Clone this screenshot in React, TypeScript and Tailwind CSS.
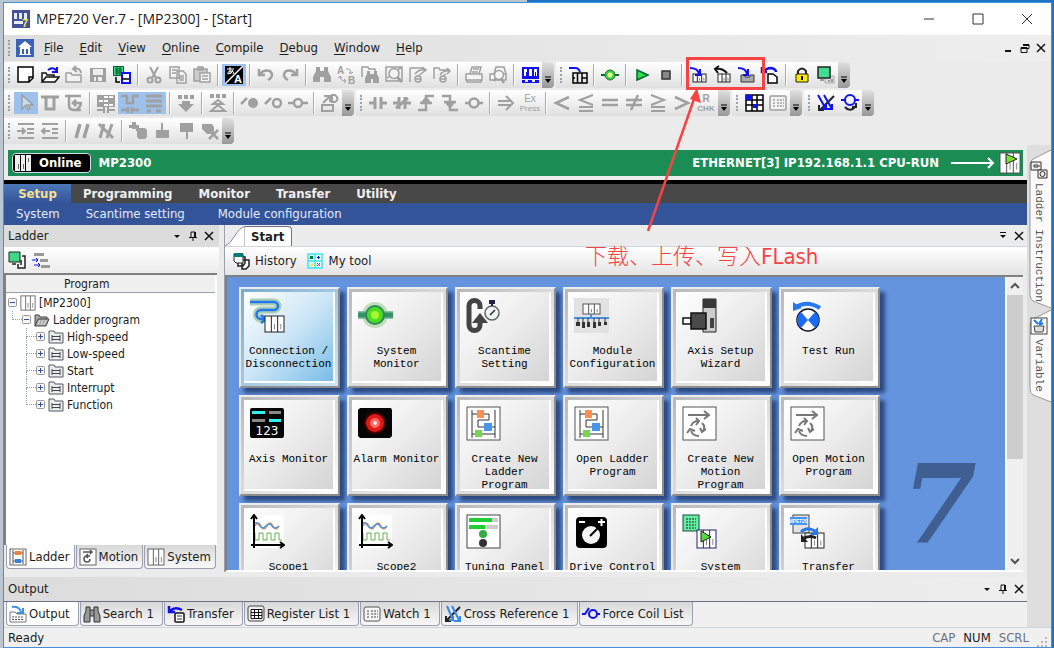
import type { ReactNode } from 'react';
import clsx from 'clsx';

const G = '#a0a0a0';
const B = '#1010f0';

const rack = (x: number, y: number, w: number, h: number, stroke = '#222') => (
  <g fill="#fff" stroke={stroke}>
    <rect x={x} y={y} width={w} height={h} />
    <path d={`M${x + w / 3} ${y}v${h}M${x + (2 * w) / 3} ${y}v${h}`} />
    <path stroke="#888" d={`M${x + w / 2} ${y + h / 2}v${h / 3}M${x + (5 * w) / 6} ${y + h / 2}v${h / 3}`} />
  </g>
);

// Toolbar glyphs, all drawn on a 20 x 20 grid
const glyphs: Record<string, ReactNode> = {
  new: <path fill="#fff" stroke="#000" strokeWidth="1.500" d="M2 2h15v11l-4 4H2zM17 12h-4v5" />,
  open: (
    <>
      <path fill="#fff" stroke="#111" strokeWidth="1.500" d="M2 16V8h4l1 2h7v2M2 17l4-5h13l-4 5z" />
      <path fill="none" stroke={B} strokeWidth="2" d="M8 5q5-4 9 1M17 2v5h-5" />
    </>
  ),
  close: (
    <>
      <path fill="#f2f2f2" stroke={G} strokeWidth="1.500" d="M2 17V8h5l1 2h9v7z" />
      <path fill="none" stroke={G} strokeWidth="2" d="M17 8q-1-6-7-4M12 1L9 4l4 3" />
    </>
  ),
  save: (
    <>
      <path fill={G} d="M2 3h16v14H2z" />
      <path fill="#eee" d="M5 4h10v6H5zM6 12h8v4H6z" />
      <path fill={G} d="M8 12h2v4H8z" />
    </>
  ),
  transferAll: (
    <>
      <path fill="#3fdc80" stroke="#053" strokeWidth="1" d="M1.500 1.500h10v9h-10z" />
      <path stroke="#053" d="M3 4h7M3 6h7M3 8h7M5 2v8M8 2v8" />
      <path fill="#fff" stroke={B} strokeWidth="2" d="M10 8h8v10h-8z" />
      <path fill="none" stroke="#000" strokeWidth="1.500" d="M4 12v5h4M10 14h7" />
    </>
  ),
  cut: (
    <g fill="none" stroke={G} strokeWidth="2">
      <path d="M6 2l6 11M14 2L8 13" />
      <circle cx="6" cy="15" r="2.500" />
      <circle cx="14" cy="15" r="2.500" />
    </g>
  ),
  copy: (
    <g fill="#f4f4f4" stroke={G} strokeWidth="1.500">
      <path d="M2 2h9v11H2zM9 6h6l3 3v9H9z" />
      <path d="M4 5h5M4 8h4M11 11h5M11 13h5M11 15h5" />
    </g>
  ),
  paste: (
    <g fill="#f4f4f4" stroke={G} strokeWidth="1.500">
      <path fill="#ccc" d="M2 4h13v12H2zM6 2h5v3H6z" />
      <path d="M8 8h10v9H8zM10 11h6M10 14h6" />
    </g>
  ),
  translate: (
    <>
      <path d="M1 1h18v18H1z" />
      <path fill="#fff" d="M18 1h1v1L2 19H1v-1z" />
      <path fill="none" stroke="#fff" d="M3 4h7M6 2v7M9 5q-1 4-5 4q-1-3 4-3q3 1 1 3" />
      <text x="10" y="18" fontSize="11" fontWeight="bold" fill="#fff" fontFamily="Liberation Sans">A</text>
    </>
  ),
  undo: <path fill="none" stroke={G} strokeWidth="2.500" d="M3 4v6h6M4 9q4-5 10-3q5 5-2 9" />,
  redo: <path fill="none" stroke={G} strokeWidth="2.500" d="M17 4v6h-6M16 9q-4-5-10-3q-5 5 2 9" />,
  find: <path fill={G} d="M4 2h4v4h4V2h4v4l3 6v5h-7v-5H8v5H1v-5l3-6z" />,
  replace: (
    <g fill={G} stroke={G}>
      <text x="1" y="9" fontSize="10" stroke="none" fontWeight="bold" fontFamily="Liberation Sans">A</text>
      <text x="12" y="19" fontSize="10" stroke="none" fontWeight="bold" fontFamily="Liberation Sans">B</text>
      <path fill="none" d="M10 4q5-1 5 5M13 7l2 2 2-2M4 11q0 5 6 5M8 14l2 2-2 2M4 11l-2 2M4 11l2 2" />
    </g>
  ),
  findIn: (
    <>
      <path fill="none" stroke={G} strokeWidth="1.500" d="M2 12V2h6l1 2h6v3" />
      <path fill={G} d="M7 6h3v3h4V6h3v3l2 4v5h-6v-4h-2v4H5v-5l2-4z" />
    </>
  ),
  zoomPage: (
    <g fill="#f2f2f2" stroke={G} strokeWidth="1.500">
      <path fill="none" d="M2 2h16v14H2zM3 13l4-3M13 5l4-2" />
      <circle cx="10" cy="8.500" r="5" />
      <path strokeWidth="2.500" d="M13 12l5 5" />
    </g>
  ),
  jumpDoc: (
    <g fill="none" stroke={G} strokeWidth="1.500">
      <path d="M2 3h13v2M2 3v14M7 9q4-5 10-4M14 2l4 3-4 3" />
      <circle cx="10" cy="14" r="3" />
      <path d="M8 14h4M10 11l4-3" />
    </g>
  ),
  jumpFolder: (
    <g fill="none" stroke={G} strokeWidth="1.500">
      <path d="M2 14V3h5l1 2h8M8 10q3-5 10-4M15 3l3 3-3 3" />
      <circle cx="11" cy="14" r="3" />
      <path d="M9 14h4M11 11l3-2" />
    </g>
  ),
  print: (
    <g fill="#f4f4f4" stroke={G} strokeWidth="1.500">
      <path d="M6 9l2-7h9l-2 7zM2 9h16v6H2zM3 15h14v2H3zM9 4h6M8 7h6" />
    </g>
  ),
  preview: (
    <g fill="#f4f4f4" stroke={G} strokeWidth="1.500">
      <path d="M6 9l2-7h8l2 7zM2 9h16v6H2z" />
      <circle cx="11" cy="10" r="4.500" />
      <path strokeWidth="2.500" d="M13 13l3 5M8 13l-2 3" />
    </g>
  ),
  modules: (
    <>
      <path fill={B} d="M2 2h17v12H2zM2 15h3v2h3v-2h4v2h3v-2h4v3H2z" />
      <path fill="#fff" d="M4 4h3v7H4zM9 4h3v7H9zM14 4h3v7h-3z" />
      <path fill={B} d="M6 7h2v4H6zM15 7h1v4h-1z" />
    </>
  ),
  connect: (
    <>
      <path fill="none" stroke={B} strokeWidth="2" d="M1 3h6q4 0 5 4" />
      <path fill="none" stroke="#000" strokeWidth="1.500" d="M5 8h14v10H5zM9.500 8v10M14 8v10M5 13h2M14 13h5" />
    </>
  ),
  node: (
    <>
      <path stroke="#086838" strokeWidth="2" d="M1 10h18" />
      <circle cx="10" cy="10" r="5" fill="#2ad84a" stroke="#3c6a30" />
      <circle cx="10" cy="10" r="2.500" fill="#f4ff80" />
    </>
  ),
  play: <path fill="#2ee04c" stroke="#063" strokeWidth="1.500" d="M5 5l11 5-11 5z" />,
  stop: <path fill="#888" stroke="#333" strokeWidth="1.500" d="M6 6h8v8H6z" />,
  download: (
    <>
      {rack(5, 9, 13, 8)}
      <path fill="none" stroke={B} strokeWidth="2" d="M2 3q8 0 9 6M12 4v6H7" />
    </>
  ),
  upload: (
    <>
      {rack(6, 9, 12, 8)}
      <path fill="none" stroke="#111" strokeWidth="2" d="M15 8q-5-5-11-4M7 1L3 4l3 4" />
    </>
  ),
  flash: (
    <>
      <path fill="#aaa" stroke="#333" d="M5 10h4v2h5v-2h4v7H5z" />
      <path fill="none" stroke={B} strokeWidth="2" d="M2 3q8 0 9 6M12 4v6H7" />
    </>
  ),
  copyBack: (
    <>
      <path fill="#fff" stroke="#000" strokeWidth="1.500" d="M8 9h5l4 3v6H8z" />
      <path fill="none" stroke={B} strokeWidth="2.500" d="M2 2v5h5M3 7q3-4 8-4q5 1 5 4" />
    </>
  ),
  lock: (
    <>
      <path fill="none" stroke="#222" strokeWidth="2" d="M6 10V6q4-5 8 0v4" />
      <path fill="#ffe800" stroke="#222" d="M4 9h12v8H4z" />
      <path d="M9 11h2v4H9z" />
    </>
  ),
  compare: (
    <>
      <path fill="#ddd" stroke="#aaa" d="M9 11h9v7H9z" />
      <path fill="#40dc90" stroke="#222" strokeWidth="1.500" d="M2 2h12v11H2z" />
      <path stroke="#555" d="M4 15h4M13 15v2M16 14v3" />
    </>
  ),
  pointer: <path fill="#c8dcf4" stroke={G} strokeWidth="1.500" d="M6 2v14l4-4 2 5 2-1-2-4h5z" />,
  branch: <path fill="none" stroke={G} strokeWidth="3" d="M1 4h18M6 4v12h8V4" />,
  branchTurn: (
    <g fill="none" stroke={G} strokeWidth="2.500">
      <path d="M1 3h16M5 3v9q0 5 5 5h7M12 17q5-3 5-8M9 10h8M12 7l-3 3 3 3" />
    </g>
  ),
  tableRung: (
    <>
      <path fill={G} d="M1 2h18v12H1z" />
      <path fill="#fff" d="M8 3h4v2H8zM13 3h4v2h-4zM3 7h4v2H3zM8 7h4v2H8zM13 11h4v2h-4zM8 11h4v2H8z" />
      <path fill="none" stroke={G} strokeWidth="2" d="M1 17h6M13 17h6M8 14v6M12 14v6" />
    </>
  ),
  series: <path fill="none" stroke={G} strokeWidth="2.500" d="M1 3h6v7h6V3h6M1 17h6M8 14v6M12 14v6M13 17h6" />,
  parallel: <path fill="none" stroke={G} strokeWidth="3" d="M2 3h16M2 8h16M2 13h16M3 18h4M12 18h5" />,
  expandDown: <path fill={G} d="M2 2h4v4H2zM8 2h4v4H8zM14 2h4v4h-4zM6 8h8v3h4l-8 8-8-8h4z" />,
  expandUp: (
    <>
      <path fill={G} d="M2 1h4v4H2zM8 1h4v4H8zM14 1h4v4h-4z" />
      <path fill="none" stroke={G} strokeWidth="2" d="M10 7l-5 4h10zM10 12l-7 6h14z" />
    </>
  ),
  forceOn: (
    <>
      <path stroke={G} strokeWidth="2.500" d="M1 11l6-6" />
      <circle cx="13" cy="10" r="5" fill={G} />
    </>
  ),
  forceOff: (
    <g fill="none" stroke={G} strokeWidth="2.500">
      <path d="M1 11l6-6" />
      <circle cx="13" cy="10" r="4" />
    </g>
  ),
  forceClear: (
    <g fill="none" stroke={G} strokeWidth="2.500">
      <path d="M0 10h6M14 10h6" />
      <circle cx="10" cy="10" r="4" />
    </g>
  ),
  popOut: (
    <g fill="none" stroke={G} strokeWidth="2">
      <path d="M2 12h11v6H2zM3 10l6-6M4 3h6v6M12 2h3q5 4 0 7h-3z" />
    </g>
  ),
  contactNo: <path fill="none" stroke={G} strokeWidth="3" d="M1 10h6M7 4v12M13 4v12M13 10h6" />,
  contactNc: <path fill="none" stroke={G} strokeWidth="3" d="M1 10h5M7 4v12M13 4v12M14 10h5M4 15L16 5" />,
  rising: <path fill="none" stroke={G} strokeWidth="2.500" d="M2 17h8V3h8M4 10h12M6 10l4-5 4 5" />,
  falling: <path fill="none" stroke={G} strokeWidth="2.500" d="M2 3h8v14h8M4 9h12M6 9l4 5 4-5" />,
  coil: (
    <g fill="none" stroke={G} strokeWidth="2.500">
      <path d="M1 10h4M15 10h4" />
      <circle cx="10" cy="10" r="4.500" />
    </g>
  ),
  arrow: <path fill="none" stroke={G} strokeWidth="2" d="M2 8h12M2 12h12M10 3l7 7-7 7" />,
  express: (
    <g fill={G} fontFamily="Liberation Sans" textAnchor="middle">
      <text x="10" y="9" fontSize="10">Ex</text>
      <text x="10" y="18" fontSize="8">Press</text>
    </g>
  ),
  lt: <path fill="none" stroke={G} strokeWidth="2.500" d="M17 4L4 10l13 6" />,
  le: <path fill="none" stroke={G} strokeWidth="2" d="M17 2L4 7l13 5M3 14h14M3 18h14" />,
  eq: <path stroke={G} strokeWidth="2.500" d="M2 7h16M2 12h16" />,
  ne: <path stroke={G} strokeWidth="2.500" d="M2 7h16M2 12h16M14 2L7 17" />,
  ge: <path fill="none" stroke={G} strokeWidth="2" d="M3 2l13 5-13 5M3 14h14M3 18h14" />,
  gt: <path fill="none" stroke={G} strokeWidth="2.500" d="M3 4l13 6-13 6" />,
  rangeCheck: (
    <g fill={G} fontFamily="Liberation Sans" fontWeight="bold" textAnchor="middle">
      <text x="10" y="9" fontSize="10">R</text>
      <text x="10" y="18" fontSize="8">CHK</text>
    </g>
  ),
  registerGrid: (
    <>
      <path fill="#fff" stroke="#000" strokeWidth="1.500" d="M2 2h17v16H2zM2 7h17M2 12h17M8 2v16M13 2v16" />
      <path fill={B} d="M2 2h6v5H2zM9 11h5v4H9z" />
    </>
  ),
  watchList: (
    <g fill="#f2f2f2" stroke={G} strokeWidth="1.500">
      <rect x="2" y="3" width="16" height="14" rx="1" />
      <path strokeDasharray="2 1" d="M5 7h2M9 7h7M5 10h2M9 10h7M5 13h2M9 13h7" />
    </g>
  ),
  crossRef: (
    <g fill="none" strokeWidth="2">
      <path stroke="#222" d="M18 3L4 17M3 12v5h5" />
      <path stroke={B} d="M2 2l8 14M8 2l8 14M11 16h5v-5M5 16h5v-5" />
    </g>
  ),
  forceCoil: (
    <g fill="none" strokeWidth="2">
      <path stroke={B} d="M1 7h4M14 7h5" />
      <circle cx="10" cy="7" r="5" stroke={B} />
      <path stroke="#222" d="M5 14q5 6 11-1M16 10v4h-4" />
    </g>
  ),
  indent: <path fill="none" stroke={G} strokeWidth="2" d="M2 3h16M11 8h7M11 12h7M2 17h16M1 10h8M6 7l3 3-3 3" />,
  outdent: <path fill="none" stroke={G} strokeWidth="2" d="M2 3h16M12 8h6M12 12h6M2 17h16M2 10h8M5 7l-3 3 3 3" />,
  comment: <path stroke={G} strokeWidth="3.500" d="M8 3L4 17M16 3l-4 14" />,
  uncomment: <path stroke={G} strokeWidth="3" d="M8 3L4 17M16 3l-5 14M3 3l14 14" />,
  addBlock: <path fill={G} d="M1 4h3V1h4v3h3v3h6l2 2v7l-2 2h-6l-2-2V10H8V8H4V7H1z" />,
  insertUp: <path fill={G} d="M9 2h2v7h6v8H4V9h5z" />,
  insertDown: <path fill={G} d="M4 2h13v9h-5v7h-2v-7H4z" />,
  removeBlock: (
    <>
      <path fill={G} d="M2 3h10l2 3v7H7L2 8z" />
      <path stroke={G} strokeWidth="2.500" d="M8 8l10 10M18 9l-9 9" />
    </>
  ),
};

const toolbarRows: string[][][] = [
  [
    ['new', 'open', 'close', 'save', 'transferAll', '|', 'cut', 'copy', 'paste', '|', '*translate', '|', 'undo', 'redo', '|',
      'find', 'replace', 'findIn', 'zoomPage', 'jumpDoc', 'jumpFolder', '|', 'print', 'preview', '|', 'modules'],
    ['connect', '|', 'node', '|', 'play', 'stop', '|', 'download', 'upload', 'flash', 'copyBack', '|', 'lock', 'compare'],
  ],
  [
    ['*pointer', 'branch', 'branchTurn', '|', 'tableRung', '*series', '*parallel', '|', 'expandDown', '|', 'expandUp', '|',
      'forceOn', 'forceOff', 'forceClear', '|', 'popOut'],
    ['contactNo', 'contactNc', 'rising', 'falling', 'coil', '|', 'arrow', 'express', '|', 'lt', 'le', 'eq', 'ne', 'ge', 'gt', 'rangeCheck'],
    ['registerGrid', 'watchList'],
    ['crossRef', 'forceCoil'],
  ],
  [['indent', 'outdent', '|', 'comment', 'uncomment', '|', 'addBlock', 'insertUp', 'insertDown', 'removeBlock']],
];

function Grip() {
  return (
    <span className="flex w-2.5 items-center justify-center">
      <span className="h-4 border-l-2 border-dotted border-gray-400" />
    </span>
  );
}

function Toolbar({ items }: { items: string[] }) {
  return (
    <div role="toolbar" className="mr-0.5 flex h-[26px] shrink-0 rounded-r bg-linear-to-b from-white to-[#e0e0e0]">
      <Grip />
      {items.map((item, i) => {
        if (item === '|') {
          return <span key={i} className="mx-[3px] my-0.5 w-0.5 border-l border-[#8fb2dc] bg-white" />;
        }
        const active = item.startsWith('*');
        const name = item.replace('*', '');
        return (
          <button key={i} type="button" aria-label={name} className={clsx('my-0.5 flex w-6 items-center justify-center', active && 'bg-[#9dc1ea]')}>
            <svg className="h-5 w-5" viewBox="0 0 20 20">{glyphs[name]}</svg>
          </button>
        );
      })}
      <button type="button" aria-label="Toolbar options" className="flex w-3 items-end justify-center rounded-r bg-linear-to-b from-[#e0e0e0] to-[#989898] pb-1">
        <svg className="h-2 w-2" viewBox="0 0 8 8"><path stroke="#000" d="M1 1h6" /><path d="M1 3h6L4 7z" /></svg>
      </button>
    </div>
  );
}

function Caret({ bar }: { bar?: boolean }) {
  return (
    <button type="button" aria-label="Options" className="flex h-4 w-4 items-center justify-center">
      <svg className="h-2.5 w-2.5" viewBox="0 0 10 10">{bar && <path stroke="#111" d="M2 1.500h6" />}<path fill="#111" d="M2 4h6L5 7z" /></svg>
    </button>
  );
}

function Pin() {
  return (
    <button type="button" aria-label="Pin" className="flex h-4 w-4 items-center justify-center">
      <svg className="h-2.5 w-2.5" viewBox="0 0 10 10"><path fill="none" stroke="#111" d="M3 6V1h4v5M1 6.500h8M5 7v3" /><path fill="#111" d="M6 1h2v5H6z" /></svg>
    </button>
  );
}

function Close() {
  return (
    <button type="button" aria-label="Close" className="flex h-4 w-4 items-center justify-center">
      <svg className="h-2.5 w-2.5" viewBox="0 0 10 10"><path stroke="#111" strokeWidth="1.500" d="M1 1l8 8M9 1L1 9" /></svg>
    </button>
  );
}

const menus = ['File', 'Edit', 'View', 'Online', 'Compile', 'Debug', 'Window', 'Help'];

const ladderIcon = (
  <>
    <rect x="1" y="1" width="33" height="33" fill="#fff" stroke="#555" />
    <path fill="none" stroke="#333" d="M6 4v28M29 4v28M6 8h17v6H12v7h17M6 28h23" />
    <path fill="#fb9050" d="M11 4h7v8h-7z" />
    <path fill="#4894ee" d="M18 17h8v8h-8z" />
    <path fill="#74d84c" d="M9 24h7v7H9z" />
  </>
);

const motionIcon = (
  <>
    <rect x="1" y="1" width="33" height="33" fill="#fff" stroke="#555" />
    <g fill="none" stroke="#777" strokeWidth="2">
      <path d="M6 9h21M22 5l5 4-5 4" />
      <path d="M9 20q2-5 7-5M14 12l3 3-3 4M20 17q4 4 1 8M24 23l-4 3-2-4M17 30q-6 0-8-5M5 27l3-4 5 2" />
    </g>
  </>
);

const scopeIcon = (
  <>
    <path fill="#fff" d="M1 1h33v33H1z" />
    <path fill="none" stroke="#e0965c" strokeWidth="1.500" d="M5 12q3-6 6 0t6 0t6 0t6 0" />
    <path fill="none" stroke="#5090d0" strokeWidth="1.500" d="M4 9q4-1 6 3t6 0t6 0t7 0" />
    <path fill="none" stroke="#60b050" d="M5 19v7h4v-7h4v7h4v-7h4v7h4v-7h4v7h3" />
    <path fill="none" stroke="#000" strokeWidth="2" d="M4 34V3M1 31h32M1 5l3-4 3 4M30 28l4 3-4 3" />
  </>
);

// Launcher tiles: 35 x 35 artwork plus a caption of one to three lines
const tiles: { lines: string[]; art: ReactNode; active?: boolean }[] = [
  {
    lines: ['Connection /', 'Disconnection'],
    active: true,
    art: (
      <>
        <path fill="none" stroke="#a9cfb0" strokeWidth="7" d="M0 4h24a4 4 0 0 1 0 8H11a4 4 0 0 0 0 9h4" />
        <path fill="none" stroke="#2277ee" strokeWidth="2.500" d="M0 4h24a4 4 0 0 1 0 8H11a4 4 0 0 0 0 9h4M11 17l5 4-5 4" />
        {rack(15, 18, 19, 16)}
      </>
    ),
  },
  {
    lines: ['System', 'Monitor'],
    art: (
      <>
        <circle cx="17" cy="17" r="13" fill="#c2dcbc" />
        <path stroke="#86c0a2" strokeWidth="8" d="M0 17h35" />
        <path stroke="#349068" strokeWidth="5" d="M0 17h35" />
        <circle cx="17" cy="17" r="9" fill="#4cdc22" stroke="#2d8a5a" strokeWidth="2" />
        <circle cx="17" cy="17" r="4" fill="#a8f830" />
      </>
    ),
  },
  {
    lines: ['Scantime', 'Setting'],
    art: (
      <>
        <path fill="none" stroke="#444" strokeWidth="5" d="M14 11V8a5 5 0 0 0-11 0v19a5 5 0 0 0 11 0v-6" />
        <path fill="#444" d="M14 15l8 10H6z" />
        <circle cx="26" cy="15" r="7" fill="#eef4f4" stroke="#666" strokeWidth="1.500" />
        <path stroke="#223" strokeWidth="1.500" d="M24 17l5-5" />
        <path fill="#224" d="M23 2h6v4h-6zM25 6h2v2h-2z" />
      </>
    ),
  },
  {
    lines: ['Module', 'Configuration'],
    art: (
      <>
        <path fill="#e2e2e2" d="M0 0h35v35H0z" />
        {rack(9, 6, 17, 10, '#555')}
        <path stroke="#4a90e0" strokeWidth="2" d="M0 20h35M17 16v4" />
        <path stroke="#333" d="M4 20v5M9 20v5M14 20v5M20 20v5M25 20v5M31 20v5" />
        <path fill="#333" d="M2 24h4v4H2zM8 24h3v6H8zM13 24h3v5h-3zM19 24h3v6h-3zM24 24h3v4h-3zM30 24h3v3h-3z" />
      </>
    ),
  },
  {
    lines: ['Axis Setup', 'Wizard'],
    art: (
      <>
        <path fill="#ccc" stroke="#222" d="M21 1h13v33H21z" />
        <path fill="#383838" d="M21 1h13v9H21z" />
        <path fill="#444" d="M28 20h4v10h-4z" />
        <path fill="#fff" stroke="#111" strokeWidth="1.500" d="M1 20h8v6H1z" />
        <path fill="#4a4a4a" stroke="#111" strokeWidth="1.500" d="M9 15h15v16H9z" />
      </>
    ),
  },
  {
    lines: ['Test Run'],
    art: (
      <>
        <path fill="none" stroke="#2878ee" strokeWidth="4" d="M6 9q11-7 24 1" />
        <path fill="#2878ee" d="M3 4v9l9-3z" />
        <circle cx="18" cy="22" r="11" fill="#fff" stroke="#112" strokeWidth="1.500" />
        <path fill="#1c6cf0" d="M18 22l-7-8a10 10 0 0 0 0 16zM18 22l7-8a10 10 0 0 1 0 16z" />
      </>
    ),
  },
  {
    lines: ['Axis Monitor'],
    art: (
      <>
        <rect x="0" y="2" width="34" height="30" rx="2" fill="#050505" />
        <path fill="#30f0f0" d="M2 5h13v3H2zM19 13h12v3H19z" />
        <path fill="#888" d="M19 5h12v3H19zM2 13h13v3H2z" />
        <text x="17" y="29" fontSize="12" fill="#fff" textAnchor="middle" fontFamily="DejaVu Sans">123</text>
      </>
    ),
  },
  {
    lines: ['Alarm Monitor'],
    art: (
      <>
        <path fill="#050505" d="M2 2h31l1 2v26l-2 2H2l-2-2V4z" />
        <circle cx="17" cy="17" r="11" fill="#400" />
        <circle cx="17" cy="17" r="9" fill="#e01818" />
        <circle cx="17" cy="17" r="5" fill="#ff6a60" />
        <circle cx="17" cy="17" r="2" fill="#ffe8e0" />
      </>
    ),
  },
  { lines: ['Create New', 'Ladder', 'Program'], art: ladderIcon },
  { lines: ['Open Ladder', 'Program'], art: ladderIcon },
  { lines: ['Create New', 'Motion', 'Program'], art: motionIcon },
  { lines: ['Open Motion', 'Program'], art: motionIcon },
  { lines: ['Scope1'], art: scopeIcon },
  { lines: ['Scope2'], art: scopeIcon },
  {
    lines: ['Tuning Panel'],
    art: (
      <>
        <rect x="1" y="1" width="33" height="33" fill="#fff" stroke="#444" />
        <path fill="#ccc" d="M3 4h29v4H3zM3 11h29v4H3z" />
        <path fill="#2c3" d="M3 4h23v4H3zM3 11h16v4H3z" />
        <circle cx="17" cy="20" r="4" fill="#3a4" />
        <circle cx="17" cy="29" r="4" fill="#333" />
      </>
    ),
  },
  {
    lines: ['Drive Control'],
    art: (
      <>
        <rect x="2" y="3" width="31" height="31" rx="4" />
        <path stroke="#fff" strokeWidth="2" d="M5 8h6M24 8h7M27.500 5v7" />
        <circle cx="17" cy="21" r="9" fill="#f4f4f4" />
        <path stroke="#000" strokeWidth="2" d="M16 22l8-8" />
      </>
    ),
  },
  {
    lines: ['System'],
    art: (
      <>
        <rect x="1" y="1" width="16" height="16" fill="#60f0a0" stroke="#244" />
        <path stroke="#222" strokeDasharray="2 1" d="M4 5h10M4 8h10M4 11h10M4 14h10" />
        {rack(15, 16, 19, 18, '#226')}
        <path fill="#58d840" stroke="#222" d="M19 17v11l10-5z" />
      </>
    ),
  },
  {
    lines: ['Transfer'],
    art: (
      <>
        <rect x="3" y="1" width="16" height="18" fill="#e4e4e4" stroke="#444" />
        <path fill="#4894ee" d="M0 3h17v8H0z" />
        <text x="8" y="9" fontSize="5" fontWeight="bold" fill="#fff" textAnchor="middle" fontFamily="Liberation Sans">MPE720</text>
        {rack(15, 19, 19, 15)}
        <path fill="none" stroke="#2878ee" strokeWidth="3" d="M11 18q6-6 14-1" />
        <path fill="#2878ee" d="M28 13v8h-8z" />
        <path fill="none" stroke="#222" strokeWidth="3" d="M26 24q-5-3-12 0" />
        <path fill="#222" d="M11 20v8h7z" />
      </>
    ),
  },
];

const smallLadder = (
  <>
    <rect x="1" y="1" width="16" height="16" fill="#fff" stroke="#666" />
    <path fill="none" stroke="#555" d="M4 2v14M14 2v14M4 5h10M4 13h10" />
    <path fill="#f08040" d="M6 3h6v4H6z" />
    <path fill="#3880e0" d="M6 11h6v4H6z" />
  </>
);
const smallMotion = (
  <>
    <rect x="1" y="1" width="16" height="16" fill="#fff" stroke="#666" />
    <path fill="none" stroke="#555" strokeWidth="1.500" d="M4 4h9M11 2l2 2-2 2M11 8H8a3 3 0 1 0 3 3M9 6L7 8l2 2" />
  </>
);
const smallRack = rack(1, 1, 16, 16, '#666');

const panelTabs = [
  { label: 'Ladder', icon: smallLadder },
  { label: 'Motion', icon: smallMotion },
  { label: 'System', icon: smallRack },
];

const outputTabs = [
  {
    label: 'Output',
    icon: (
      <>
        <path fill="#fff" stroke="#777" d="M1 7h5l2 2h9v8H1z" />
        <path stroke="#555" strokeDasharray="2 1" d="M3 12h12M3 14.500h12" />
        <path fill="none" stroke="#3c90e8" strokeWidth="2" d="M3 2q7-1 9 5M14 3v5H8" />
      </>
    ),
  },
  {
    label: 'Search 1',
    icon: <path fill="#999" stroke="#333" d="M3 2h4v3h4V2h4v4l2 5v6h-6v-6H7v6H1v-6l2-5zM7 5v6M11 5v6" />,
  },
  {
    label: 'Transfer',
    icon: (
      <>
        <rect x="8" y="8" width="9" height="9" rx="1" fill="#fff" stroke="#111" strokeWidth="1.500" />
        <path stroke="#333" d="M10 11h5M10 14h5" />
        <path fill="none" stroke={B} strokeWidth="2.500" d="M2 1v6h6M3 6q5-5 12-1" />
      </>
    ),
  },
  {
    label: 'Register List 1',
    icon: (
      <>
        <rect x="1" y="1" width="16" height="15" rx="2" fill="#eee" stroke="#444" />
        <path fill="#fff" stroke="#111" d="M4 4.500h11v9H4zM4 7.500h11M4 10.500h11M7.500 4v9M11.500 4v9" />
      </>
    ),
  },
  {
    label: 'Watch 1',
    icon: (
      <>
        <rect x="1" y="2" width="16" height="14" rx="2" fill="#f6f6f6" stroke="#555" />
        <path stroke="#444" strokeDasharray="2 1" d="M4 6h2M8 6h7M4 9h2M8 9h7M4 12h2M8 12h7" />
      </>
    ),
  },
  {
    label: 'Cross Reference 1',
    icon: (
      <g fill="none" strokeWidth="2">
        <path stroke="#222" d="M16 2L3 15M2 11v5h5" />
        <path stroke="#3888e8" d="M3 1l6 14M8 1l7 14M10 16h6v-5M5 15h4v-4" />
      </g>
    ),
  },
  {
    label: 'Force Coil List',
    icon: (
      <g fill="none" stroke={B} strokeWidth="2">
        <path d="M0 9h3l4-6M15 9h3" />
        <circle cx="11" cy="9" r="4" />
      </g>
    ),
  },
];

function SheetTab({ label, icon, active, className }: { label: string; icon: ReactNode; active: boolean; className: string }) {
  return (
    <button
      type="button"
      role="tab"
      aria-selected={active}
      className={clsx(
        'flex h-6 shrink-0 items-center gap-0.5 rounded-b border border-t-0 border-gray-400 pl-0.5 text-[13px]',
        active ? 'bg-white' : 'bg-linear-to-b from-[#d8d8d8] to-[#f8f8f8]',
        className,
      )}
    >
      <svg className="h-[18px] w-[18px]" viewBox="0 0 18 18">{icon}</svg>
      {label}
    </button>
  );
}

function Expander({ open }: { open?: boolean }) {
  return (
    <button type="button" aria-label={open ? 'Collapse' : 'Expand'} className="h-[9px] w-[9px] shrink-0">
      <svg className="h-[9px] w-[9px]" viewBox="0 0 9 9">
        <rect x="0.500" y="0.500" width="8" height="8" rx="1" fill="#f6f6f6" stroke="#999" />
        <path stroke="#35509a" d={open ? 'M2 4.500h5' : 'M2 4.500h5M4.500 2v5'} />
      </svg>
    </button>
  );
}

function Connector({ last }: { last?: boolean }) {
  return (
    <span className="ml-1 flex h-full w-2.5 flex-col">
      <span className="h-[9px] border-b border-l border-dotted border-gray-400" />
      {!last && <span className="flex-1 border-l border-dotted border-gray-400" />}
    </span>
  );
}

const folders = ['High-speed', 'Low-speed', 'Start', 'Interrupt', 'Function'];

function LadderPanel() {
  return (
    <aside className="flex w-[215px] shrink-0 flex-col">
      <div className="flex h-[22px] shrink-0 items-center bg-[#dcdcdc] pr-0.5 pl-1">
        <h2 className="flex-1 text-[13px]">Ladder</h2>
        <Caret />
        <Pin />
        <Close />
      </div>
      <div className="flex h-[26px] shrink-0 items-center gap-1.5 bg-linear-to-b from-white to-[#ececec] pl-1">
        <button type="button" aria-label="Program list">
          <svg className="h-[18px] w-[18px]" viewBox="0 0 18 18">
            <path fill="#3fd888" stroke="#222" d="M1 1h11v10H1z" />
            <path fill="none" stroke="#222" strokeWidth="1.500" d="M4 13h4M10 13v4h7V5h-3M13 9v5" />
          </svg>
        </button>
        <button type="button" aria-label="Sort">
          <svg className="h-[18px] w-[18px]" viewBox="0 0 18 18">
            <path fill="#999" d="M2 2h10v3H2zM8 8h8v3H8zM9 14h9v3H9z" />
            <path fill="none" stroke={B} d="M0 9h6M4 7l2 2-2 2M2 14h6M6 12l2 2-2 2" />
          </svg>
        </button>
      </div>
      <div className="mr-0.5 min-h-0 flex-1 overflow-hidden border-t-2 border-l-2 border-[#808080] bg-white">
        <div className="mr-0.5 h-[18px] border-b border-gray-400 bg-[#f0f0f0] pl-[58px] text-xs leading-[18px]">Program</div>
        <ul role="tree" className="pt-px pl-0.5 text-xs">
          <li className="flex h-[17px] items-center gap-[3px]">
            <Expander open />
            <svg className="h-4 w-4" viewBox="0 0 18 18">{smallRack}</svg>
            [MP2300]
          </li>
          <li className="flex h-[17px] items-center">
            <Connector last />
            <span className="flex items-center gap-[3px]">
              <Expander open />
              <svg className="h-4 w-4" viewBox="0 0 16 16">
                <path fill="#aaa" stroke="#444" d="M1 14V3h4l1 2h7v2M1 14L4 7h11l-3 7z" />
                <path stroke="#ddd" d="M6 8l-2 5M9 8l-2 5M12 8l-2 5" />
              </svg>
              Ladder program
            </span>
          </li>
          {folders.map((name, i) => (
            <li key={name} className="flex h-[17px] items-center">
              <span className="w-3.5" />
              <Connector last={i === folders.length - 1} />
              <span className="flex items-center gap-[3px]">
                <Expander />
                <svg className="h-4 w-4" viewBox="0 0 16 16">
                  <path fill="#e8eee8" stroke="#556" d="M1 14V2h5l1 2h8v10z" />
                  <path fill="none" stroke="#445" d="M4 6v6M12 6v6M4 7.500h8M4 10.500h8" />
                </svg>
                {name}
              </span>
            </li>
          ))}
        </ul>
      </div>
      <div role="tablist" className="flex h-[27px] shrink-0 gap-px pl-0.5">
        {panelTabs.map((tab, i) => <SheetTab key={tab.label} {...tab} active={i === 0} className="pr-1" />)}
      </div>
    </aside>
  );
}

function Tile({ lines, art, active }: (typeof tiles)[number]) {
  return (
    <button
      type="button"
      className={clsx(
        'h-[101px] border-2 border-t-[#ececec] border-r-[#8c8c8c] border-b-[#8c8c8c] border-l-[#ececec] p-[3px] shadow-[5px_5px_4px_#2c4a80]',
        active ? 'bg-linear-to-br from-[#7aaccc] to-[#cfe6f6]' : 'bg-linear-to-br from-[#b8b8b8] to-white',
      )}
    >
      <span
        className={clsx(
          'flex h-full flex-col items-center border-r-2 border-b-2 border-white pt-[6px]',
          active ? 'bg-linear-to-br from-white via-[#cce6f6] to-[#78bce8]' : 'bg-linear-to-br from-white via-[#ececec] to-[#d4d4d4]',
        )}
      >
        <svg className="ml-1.5 h-[35px] w-[35px] shrink-0 self-start" viewBox="0 0 35 35">{art}</svg>
        <span className="mt-3 text-center font-['Liberation_Mono',monospace] text-[11px] leading-[13px] whitespace-nowrap text-black">
          {lines.map((line) => <span key={line} className="block">{line}</span>)}
        </span>
      </span>
    </button>
  );
}

function StartPage() {
  return (
    <main className="ml-[5px] flex min-w-0 flex-1 flex-col border-l border-gray-400">
      <div className="flex h-[22px] shrink-0 items-end border-b border-gray-300 bg-[#ececec]">
        <svg className="h-5 w-5" viewBox="0 0 20 20"><path fill="#fff" stroke="#888" d="M0 20Q5 18 9 11Q15 1 20 0.500V20" /></svg>
        <button type="button" role="tab" aria-selected className="h-5 rounded-tr border-t border-r border-gray-500 bg-white pr-[7px] pl-1.5 text-[13px] leading-[18px] font-bold">
          Start
        </button>
        <span className="flex flex-1 items-center justify-end self-stretch">
          <Caret bar />
          <Close />
        </span>
      </div>
      <div className="flex h-7 shrink-0 items-center bg-linear-to-b from-white to-[#e4e4e4] pl-2 text-[13px]">
        <button type="button" className="flex items-center gap-1">
          <svg className="h-[18px] w-[18px]" viewBox="0 0 18 18">
            <path fill="#fff" stroke="#222" strokeWidth="1.500" d="M9 8h7v6l-3 3H9zM5 5h7v6l-2 3H5z" />
            <path fill="#fff" stroke="#222" d="M1 2h9v9H3L1 9z" />
            <path fill="#087878" d="M1 1h9v4H1z" />
          </svg>
          History
        </button>
        <button type="button" className="ml-2.5 flex items-center gap-1.5">
          <svg className="h-4 w-4" viewBox="0 0 16 16">
            <path fill="#e8ffff" stroke="#40e4f0" strokeWidth="1.500" d="M1 1h14v14H1zM8 1v14M1 8h14" />
            <path fill="#073" d="M3 3h3v3H3z" />
            <path stroke={B} d="M10 4.500h3M11.500 3v3" />
            <path fill="#fd4" d="M3 12l2-2 2 2-2 2z" />
            <path stroke="#e24" d="M10 10l3 3M13 10l-3 3" />
          </svg>
          My tool
        </button>
      </div>
      <div className="mr-1 flex min-h-0 flex-1 border-t-2 border-b-2 border-l-2 border-[#808080] border-b-white">
        <div className="relative min-w-0 flex-1 overflow-hidden bg-[#6494de]">
          <span aria-hidden className="absolute right-7 bottom-3 font-['DejaVu_Serif',serif] text-[108px] leading-[108px] font-bold text-[#3f5f92] italic">7</span>
          <div className="relative grid grid-cols-[repeat(6,101px)] gap-[7px] px-3 pt-2.5">
            {tiles.map((tile, i) => <Tile key={i} {...tile} />)}
          </div>
        </div>
        <div className="flex w-[18px] flex-col border-l-2 border-white bg-[#f0f0f0]">
          <button type="button" aria-label="Scroll up" className="flex h-[18px] items-center justify-center">
            <svg className="h-2.5 w-2.5" viewBox="0 0 10 10"><path fill="none" stroke="#555" strokeWidth="2" d="M1 7l4-4 4 4" /></svg>
          </button>
          <div className="h-[56%] bg-[#cdcdcd]" />
          <button type="button" aria-label="Scroll down" className="mt-auto flex h-[18px] items-center justify-center">
            <svg className="h-2.5 w-2.5" viewBox="0 0 10 10"><path fill="none" stroke="#555" strokeWidth="2" d="M1 3l4 4 4-4" /></svg>
          </button>
        </div>
      </div>
    </main>
  );
}

function SideTab({ label, icon, className, height }: { label: string; icon: ReactNode; className: string; height: number }) {
  return (
    <button type="button" className={clsx('relative flex w-full flex-col items-center gap-1', className)}>
      <svg className="absolute inset-0 h-full w-full" viewBox={`0 0 24 ${height}`} preserveAspectRatio="none">
        <path fill="#fafafa" stroke="#999" d={`M24 1L6 10q-3 2-3 6V${height - 14}q0 4 3 6L24 ${height - 1}`} />
      </svg>
      <svg className="relative h-[18px] w-[18px]" viewBox="0 0 18 18">{icon}</svg>
      <span className="relative font-['Liberation_Mono',monospace] text-[11px] leading-3 whitespace-nowrap text-[#555] [writing-mode:vertical-rl]">{label}</span>
    </button>
  );
}

function Annotation() {
  return (
    <div className="pointer-events-none absolute inset-0">
      <svg className="absolute top-0 left-0 h-[240px] w-[800px]" viewBox="0 0 800 240">
        <rect x="683.500" y="55.500" width="76" height="30" fill="none" stroke="#f64343" strokeWidth="3" />
        <path stroke="#f64343" strokeWidth="2.500" d="M644 228L690 96" />
        <path fill="#f64343" d="M693 85l4 15-11-4z" />
      </svg>
      <p className="absolute top-[238px] left-[581px] font-['DejaVu_Sans_Condensed','Noto_Sans_CJK_SC',sans-serif] text-[22px] leading-8 font-light whitespace-nowrap text-[#f64343]">
        下载、上传、写入FLash
      </p>
    </div>
  );
}

export default function App() {
  return (
    <div className="h-screen bg-linear-to-r from-[#bcc6d0] from-50% to-[#1c74c4] to-50% pt-0.5 pr-0.5 pl-[3px] font-['DejaVu_Sans_Condensed','DejaVu_Sans',sans-serif] text-[#1c1c1c]">
      <div className="relative flex h-full flex-col border border-[#4590d8] bg-[#ebebeb]">
        <header className="flex h-8 shrink-0 items-center bg-white pl-2">
          <svg className="h-[18px] w-[18px]" viewBox="0 0 18 18">
            <path fill="#445098" d="M0 0h18v18H0z" />
            <path fill="#e8ecff" d="M2 3h3v6H2zM7 3h3v6H7zM12 3h3v6h-3zM2 11h9v3H2z" />
            <text x="10" y="17" fontSize="11" fontWeight="bold" fill="#f4e850" fontFamily="Liberation Sans">7</text>
          </svg>
          <h1 className="ml-1.5 flex-1 font-['Open_Sans',sans-serif] text-sm">MPE720 Ver.7 - [MP2300] - [Start]</h1>
          {['M1 6h10', 'M1 1h10v10H1z', 'M1 1l10 10M11 1L1 11'].map((d, i) => (
            <button key={d} type="button" aria-label={['Minimize', 'Maximize', 'Close window'][i]} className="flex h-full w-[49px] items-center justify-center">
              <svg className="h-3 w-3" viewBox="0 0 12 12"><path fill="none" stroke="#333" d={d} /></svg>
            </button>
          ))}
        </header>

        <nav className="flex h-[26px] shrink-0 items-center bg-linear-to-r from-[#dedede] to-[#eeeeee] pr-0.5">
          <Grip />
          <svg className="ml-0.5 h-[18px] w-[18px]" viewBox="0 0 18 18">
            <path fill="#3c62b8" d="M0 0h18v18H0z" />
            <path fill="#fff" d="M9 2l7 6H2zM4 8h10v2H4zM4 10h2v6H4zM8 10h2v6H8zM12 10h2v6h-2zM3 15h12v1H3z" />
          </svg>
          <ul className="ml-2.5 flex flex-1 gap-4 text-[13px]">
            {menus.map((name) => (
              <li key={name}>
                <button type="button"><span className="underline underline-offset-2">{name[0]}</span>{name.slice(1)}</button>
              </li>
            ))}
          </ul>
          <button type="button" aria-label="Minimize document" className="flex h-4 w-[17px] items-center justify-center">
            <svg className="h-2.5 w-2.5" viewBox="0 0 10 10"><path stroke="#111" strokeWidth="2" d="M2 8h6" /></svg>
          </button>
          <button type="button" aria-label="Restore document" className="flex h-4 w-[17px] items-center justify-center">
            <svg className="h-2.5 w-2.5" viewBox="0 0 10 10"><path fill="none" stroke="#111" d="M3 1.500h6v4H7M1 4.500h6v5H1zM3 2.500h6M1 5.500h6" /></svg>
          </button>
          <Close />
        </nav>

        <div className="shrink-0">
          {toolbarRows.map((row, i) => (
            <div key={i} className="flex h-7 items-center">
              {row.map((items, j) => <Toolbar key={j} items={items} />)}
            </div>
          ))}
        </div>

        <div className="flex min-h-0 flex-1">
          <div className="flex min-w-0 flex-1 flex-col">
            <div className="mx-1 mt-[5px] mb-1 flex h-[26px] shrink-0 items-center bg-[#1b8c54] pr-0.5 pl-1 text-[13px] font-bold text-white">
              <div className="flex h-5 items-center gap-2 rounded border border-[#cde] bg-black pr-2 pl-0.5">
                <svg className="h-4 w-4" viewBox="0 0 16 16"><path fill="#eee" d="M0 0h5v16H0zM6 0h4v16H6zM11 0h5v16h-5z" /><path stroke="#666" d="M3.500 9v5M8.500 9v5M13.500 3v4" /></svg>
                Online
              </div>
              <span className="ml-2 flex-1">MP2300</span>
              <span>ETHERNET[3] IP192.168.1.1 CPU-RUN</span>
              <svg className="mr-1 ml-3 h-3 w-11" viewBox="0 0 44 12"><path fill="none" stroke="#fff" strokeWidth="2" d="M0 6h42M37 1l5 5-5 5" /></svg>
              <svg className="h-[22px] w-[22px]" viewBox="0 0 22 22">
                {rack(1, 1, 20, 20, '#555')}
                <path fill="#7ce030" stroke="#222" d="M7 2v10l11-5z" />
              </svg>
            </div>
            <div className="h-1 shrink-0 bg-black" />
            <nav className="flex h-[19px] shrink-0 items-center bg-[#484848] text-[13px] font-bold text-[#f0f0f0]">
              <button type="button" className="h-full w-[67px] bg-linear-to-b from-[#4c78b8] to-[#34549a] text-[#f8e08c]">Setup</button>
              {['Programming', 'Monitor', 'Transfer', 'Utility'].map((name, i) => (
                <button key={name} type="button" className={i === 0 ? 'ml-3' : 'ml-[26px]'}>{name}</button>
              ))}
            </nav>
            <nav className="flex h-[22px] shrink-0 items-center bg-[#34549a] pl-3 text-[13px] text-[#e4ecfa]">
              <button type="button">System</button>
              <button type="button" className="ml-[26px]">Scantime setting</button>
              <button type="button" className="ml-[33px]">Module configuration</button>
            </nav>
            <div className="flex min-h-0 flex-1">
              <LadderPanel />
              <StartPage />
            </div>
            <div className="mt-[5px] flex h-6 shrink-0 items-center bg-linear-to-r from-[#dcdcdc] to-[#eeeeee] pl-1">
              <h2 className="flex-1 text-[13px]">Output</h2>
              <Caret />
              <Pin />
              <Close />
            </div>
            <div role="tablist" className="flex h-[26px] shrink-0 gap-px border-t border-gray-500 bg-[#f0f0f0] pl-0.5">
              {outputTabs.map((tab, i) => <SheetTab key={tab.label} {...tab} active={i === 0} className="pr-2" />)}
            </div>
          </div>
          <aside className="w-6 shrink-0 bg-[#dedede] pt-1">
            <SideTab
              label="Ladder Instruction"
              className="h-[160px] pt-3"
              height={160}
              icon={
                <g fill="#eee" stroke="#333">
                  <path d="M1 1h10v8H1zM3 5h2M5 3v4M7 3v4M7 5h3" />
                  <path d="M8 9h9v8H8z" />
                  <circle cx="12.500" cy="13" r="2.500" />
                </g>
              }
            />
            <SideTab
              label="Variable"
              className="h-[94px] pt-2"
              height={94}
              icon={
                <>
                  <rect x="1" y="1" width="16" height="16" fill="#fff" stroke="#444" />
                  <path fill="#ddd" stroke="#444" d="M4 9h10l-1 6H5z" />
                  <path stroke="#1c78f0" strokeWidth="2" d="M4 3l4 4M12 2L9 7M13 6l-4 2" />
                </>
              }
            />
          </aside>
        </div>

        <footer className="flex h-5 shrink-0 items-center border-t border-gray-300 bg-[#f0f0f0] pr-1 pl-1 text-[13px]">
          <span className="flex-1">Ready</span>
          <span className="text-gray-500">CAP</span>
          <span className="ml-2">NUM</span>
          <span className="ml-2 text-gray-500">SCRL</span>
          <svg className="ml-2 h-2.5 w-2.5 self-end" viewBox="0 0 10 10"><path fill="#b8b8b8" d="M8 0h2v2H8zM4 4h2v2H4zM8 4h2v2H8zM0 8h2v2H0zM4 8h2v2H4zM8 8h2v2H8z" /></svg>
        </footer>
        <Annotation />
      </div>
    </div>
  );
}
